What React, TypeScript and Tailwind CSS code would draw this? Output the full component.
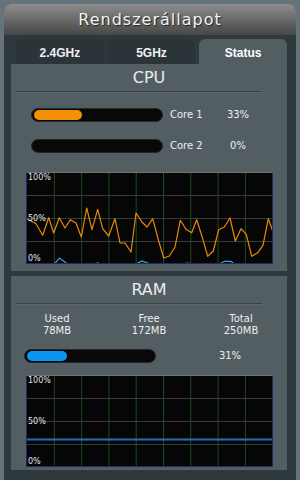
import type { ReactNode } from 'react';

const sans = { fontFamily: '"DejaVu Sans", Verdana, sans-serif' };
const arial = { fontFamily: '"Liberation Sans", Arial, sans-serif' };

// traced in 3x zoom coordinates, chart box is x 78..818, y 18..293
const cpuLine: [number, number][] = [
  [78, 155], [105, 170], [125, 205], [143, 152], [158, 198], [175, 152], [192, 183], [208, 158],
  [225, 168], [241, 210], [257, 123], [273, 188], [290, 127], [305, 185], [323, 207], [342, 155],
  [357, 228], [372, 228], [390, 255], [405, 138], [423, 165], [438, 180], [455, 155], [473, 222],
  [488, 273], [505, 267], [522, 240], [538, 160], [555, 187], [572, 197], [587, 158], [605, 215],
  [620, 268], [637, 252], [653, 188], [670, 180], [687, 153], [703, 222], [720, 185], [736, 202],
  [752, 268], [770, 257], [786, 235], [802, 155], [818, 200],
];
const cpuBlue: [number, number][] = [
  [78, 292], [160, 292], [175, 273], [200, 291], [280, 291], [290, 288], [300, 291], [405, 291],
  [423, 282], [445, 290], [460, 291], [545, 291], [560, 288], [575, 291], [655, 291], [670, 283],
  [690, 283], [700, 291], [818, 291],
];

const toPts = (pts: [number, number][]) =>
  pts.map(([x, y]) => `${((x - 78) / 3).toFixed(1)},${((y - 18) / 3).toFixed(1)}`).join(' ');

function Chart({ children }: { children?: ReactNode }) {
  const w = 247;
  const h = 92;
  return (
    <div className="relative ml-[15px] h-[92px] w-[247px] border border-[#26266e] border-t-[#6c7478] bg-[#060606]">
      <svg width={w - 2} height={h - 2} viewBox={`0 0 ${w - 2} ${h - 2}`} className="absolute left-0 top-0">
        {[1, 2, 3, 4, 5, 6, 7, 8].map((i) => (
          <line key={i} x1={i * 27.3} x2={i * 27.3} y1={0} y2={h} stroke="#1f4a1f" strokeWidth={1} />
        ))}
        {[1, 2, 3].map((i) => (
          <line key={i} x1={0} x2={w} y1={i * 23 - 0.5} y2={i * 23 - 0.5} stroke="#3a3a3a" strokeWidth={1} />
        ))}
        {children}
      </svg>
      <span className="absolute left-[1px] top-[1px] text-[8px] leading-[8px] text-[#e6e6e6]" style={sans}>100%</span>
      <span className="absolute left-[1px] top-[42px] text-[8px] leading-[8px] text-[#e6e6e6]" style={sans}>50%</span>
      <span className="absolute left-[1px] top-[82px] text-[8px] leading-[8px] text-[#e6e6e6]" style={sans}>0%</span>
    </div>
  );
}

function Bar({ pct, color }: { pct: number; color: string }) {
  return (
    <div className="flex h-[14px] w-[132px] items-center rounded-full border border-[#262626] bg-[#080808] px-[2px]">
      {pct > 0 && <div className={`h-[10px] rounded-full ${color}`} style={{ width: `${pct}px` }} />}
    </div>
  );
}

function Title({ children }: { children: ReactNode }) {
  return (
    <>
      <div className="pt-[4px] text-center text-[16px] leading-[19px] text-[#ececec]" style={sans}>
        {children}
      </div>
      <div className="ml-[5px] mt-[4px] h-[1px] w-[246px] bg-[#394347]" />
      <div className="ml-[5px] h-[1px] w-[246px] bg-[#5c666b]" />
    </>
  );
}

function CoreRow({ label, pct, fill }: { label: string; pct: string; fill: number }) {
  return (
    <div className="ml-[20px] flex items-center text-[10px] text-[#eeeeee]" style={sans}>
      <Bar pct={fill} color="bg-[#f39005]" />
      <span className="ml-[7px] w-[50px]">{label}</span>
      <span className="w-[36px] text-center">{pct}</span>
    </div>
  );
}

export default function App() {
  return (
    <div className="h-[480px] w-[300px] overflow-hidden bg-[#66737a] px-[4px] pt-[4px]">
      <div className="flex h-full flex-col rounded-t-[7px] bg-[#2e393e]">
        <div className="flex h-[31px] items-center justify-center rounded-t-[7px] bg-gradient-to-b from-[#8e8e8e] to-[#474747]">
          <span
            className="text-[16px] tracking-[1px] text-[#f2f2f2] [text-shadow:1px_1px_1px_#222]"
            style={sans}
          >
            Rendszerállapot
          </span>
        </div>

        <div className="mt-[4px] flex h-[25px] gap-[4px] pl-[12px] pr-[9px]" style={arial}>
          <div className="flex flex-1 items-center justify-center rounded-t-[6px] bg-[#2a3439] pt-[3px] text-[12px] font-bold text-[#f0f0f0]">
            2.4GHz
          </div>
          <div className="flex flex-1 items-center justify-center rounded-t-[6px] bg-[#2a3439] pt-[3px] text-[12px] font-bold text-[#f0f0f0]">
            5GHz
          </div>
          <div className="flex flex-1 items-center justify-center rounded-t-[6px] bg-[#535e63] pt-[3px] text-[12px] font-bold text-white">
            Status
          </div>
        </div>

        <div className="ml-[7px] mr-[9px] h-[207px] bg-[#535e63]">
          <Title>CPU</Title>
          <div className="mt-[14px] flex flex-col gap-[16px]">
            <CoreRow label="Core 1" pct="33%" fill={48} />
            <CoreRow label="Core 2" pct="0%" fill={0} />
          </div>
          <div className="mt-[19px]">
            <Chart>
              <polyline points={toPts(cpuBlue)} fill="none" stroke="#3aa6d6" strokeWidth={1.2} />
              <polyline points={toPts(cpuLine)} fill="none" stroke="#e8890c" strokeWidth={1.2} strokeLinejoin="round" />
            </Chart>
          </div>
        </div>

        <div className="ml-[7px] mr-[9px] mt-[5px] h-[194px] bg-[#535e63]">
          <Title>RAM</Title>
          <div className="mt-[8px] grid w-[276px] grid-cols-3 text-center text-[10px] leading-[11.5px] text-[#eeeeee]" style={sans}>
            <div>
              <div>Used</div>
              <div>78MB</div>
            </div>
            <div>
              <div>Free</div>
              <div>172MB</div>
            </div>
            <div>
              <div>Total</div>
              <div>250MB</div>
            </div>
          </div>
          <div className="ml-[13px] mt-[12px] flex items-center text-[10px] text-[#eeeeee]" style={sans}>
            <Bar pct={40} color="bg-[#0a96f0]" />
            <span className="ml-[49px] w-[50px] text-center">31%</span>
          </div>
          <div className="mt-[12px]">
            <Chart>
              <line x1={0} x2={245} y1={63.5} y2={63.5} stroke="#1f6fb4" strokeWidth={2} />
            </Chart>
          </div>
        </div>
      </div>
    </div>
  );
}
